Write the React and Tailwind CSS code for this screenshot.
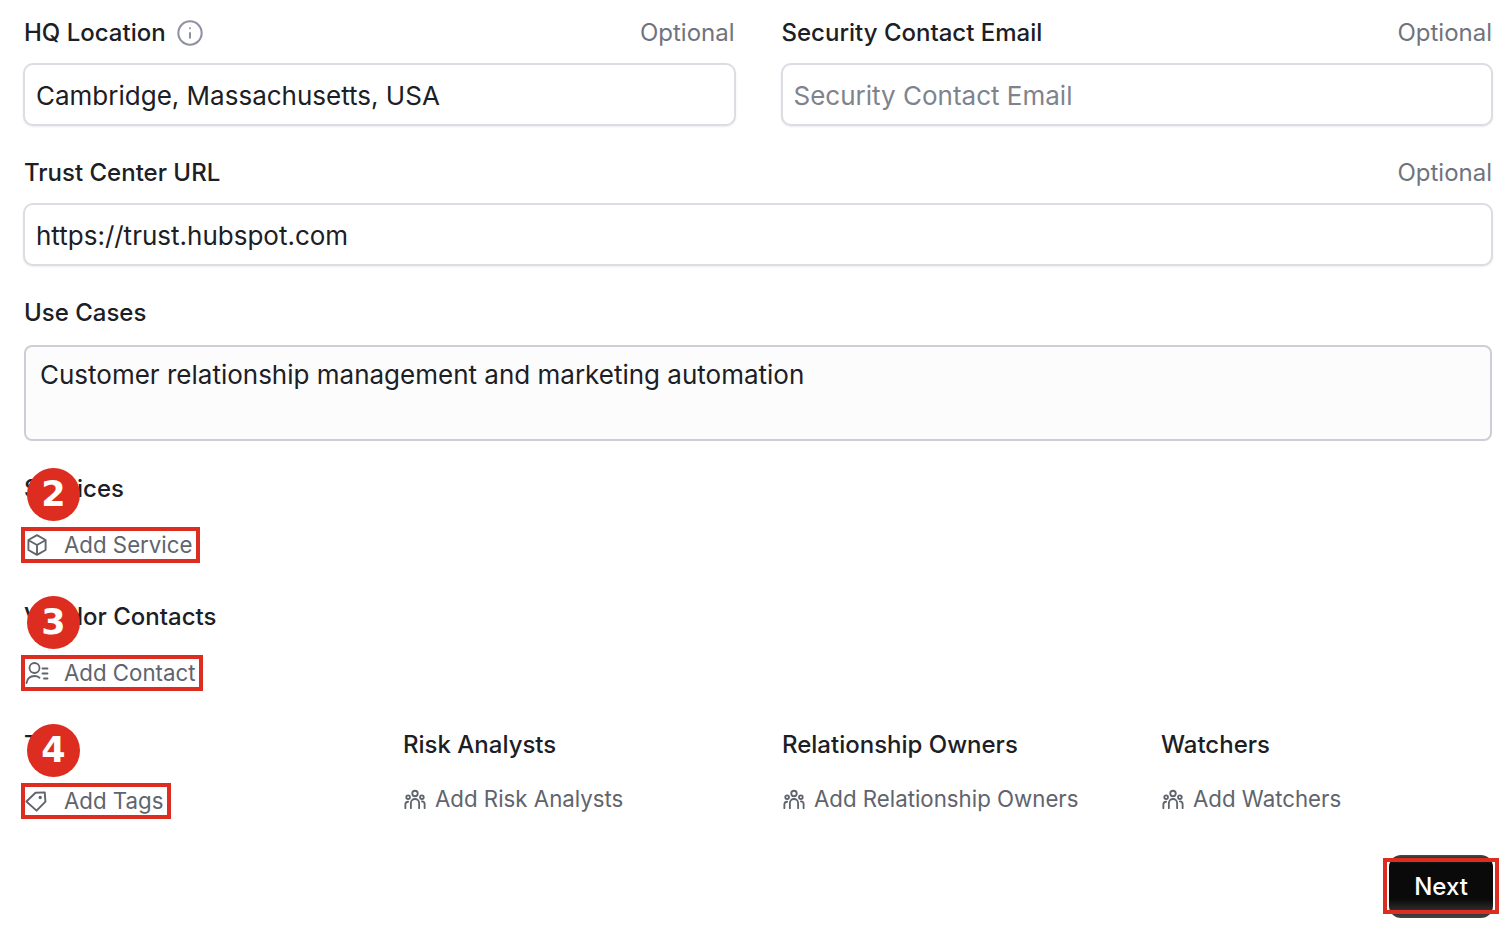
import React from "react";
import { Info } from "lucide-react";

const font = { fontFamily: "Inter, 'Noto Sans', sans-serif" };

function Label({ children, optional, info }) {
  return (
    <div className="flex h-[24px] items-center justify-between pl-px pr-px">
      <div className="flex items-center gap-[10px] text-[24px] leading-[24px] font-medium whitespace-nowrap text-[#1c2024]">
        <span>{children}</span>
        {info && <Info className="h-[28px] w-[28px] text-[#8f91a0]" strokeWidth={1.75} />}
      </div>
      {optional && <span className="text-[24px] leading-[24px] text-[#70737d]">Optional</span>}
    </div>
  );
}

function Input({ value, placeholder }) {
  return (
    <div className={`mt-[18px] flex h-[63px] items-center rounded-[10px] border-2 border-[#dcdde3] bg-white px-[11px] text-[26px] shadow-[0_1px_2px_rgba(0,0,0,0.08)] ${value ? "text-[#1c2024]" : "text-[#80838d]"}`}>
      <span className="pt-px">{value || placeholder}</span>
    </div>
  );
}

const BoxIcon = () => (
  <svg viewBox="0 0 24 24" className="ml-[-1px] h-[24px] w-[24px] text-[#60646c]" fill="none" stroke="currentColor" strokeWidth="1.9" strokeLinejoin="round">
    <path d="M12 2.2 20.6 7v10L12 21.8 3.4 17V7Z" />
    <path d="M3.6 7.2 12 12l8.4-4.8M12 12v9.6" />
  </svg>
);
const ContactIcon = () => (
  <svg viewBox="0 0 24 24" className="h-[24px] w-[24px] text-[#60646c]" fill="none" stroke="currentColor" strokeWidth="1.8" strokeLinecap="round">
    <circle cx="9.5" cy="7" r="5" />
    <path d="M1.5 22c.8-4.5 4-7 8-7 2 0 3.7.6 5 1.7" />
    <path d="M17.5 7.5h5M17.5 12.5h5M19 17.5h3.5" />
  </svg>
);
const TagIcon = () => (
  <svg viewBox="0 0 24 24" className="ml-[-2px] h-[22px] w-[22px] text-[#60646c]" fill="none" stroke="currentColor" strokeWidth="2.1" strokeLinejoin="round">
    <path d="M1.5 12.5 11.5 3l10-.4.8 10L12.6 22.5Z" />
    <circle cx="16.6" cy="8.2" r="1.8" fill="currentColor" stroke="none" />
  </svg>
);
const PeopleIcon = () => (
  <svg viewBox="0 0 24 24" className="h-[22px] w-[22px] text-[#60646c]" fill="none" stroke="currentColor" strokeWidth="2" strokeLinecap="round">
    <circle cx="12" cy="6" r="3" />
    <circle cx="4.5" cy="10" r="2" />
    <circle cx="19.5" cy="10" r="2" />
    <path d="M7.5 22v-5.5a4.5 4.5 0 0 1 9 0V22" />
    <path d="M1.5 22v-4.5A3 3 0 0 1 4.5 15" />
    <path d="M22.5 22v-4.5a3 3 0 0 0-3-3" />
  </svg>
);

function AddBox({ icon, children, width }) {
  return (
    <div className={`ml-[-2px] flex h-[36px] items-center border-4 border-[#dc2d20] text-[22.25px] whitespace-nowrap text-[#60646c] ${width}`}>
      <span className="mr-[15px] flex w-[24px] justify-center">{icon}</span>
      <span>{children}</span>
    </div>
  );
}

function Badge({ n }) {
  return (
    <div className="absolute left-[4px] top-[-9px] flex h-[53px] w-[53px] items-center justify-center rounded-full bg-[#dc2d20] text-[35px] font-bold text-white" style={{ fontFamily: "'DejaVu Sans', sans-serif" }}>
      {n}
    </div>
  );
}

function AddPlain({ children }) {
  return (
    <div className="mt-[24px] flex h-[36px] items-center gap-[9px] pl-[2px] text-[22.25px] whitespace-nowrap text-[#60646c]">
      <PeopleIcon />
      <span>{children}</span>
    </div>
  );
}

export default function App() {
  return (
    <div className="h-[928px] w-[1510px] overflow-hidden bg-white pl-[23px] pr-[17px] pt-[21px]" style={font}>
      <div className="grid grid-cols-2 gap-x-[45px]">
        <div>
          <Label optional info>HQ Location</Label>
          <Input value="Cambridge, Massachusetts, USA" />
        </div>
        <div>
          <Label optional>Security Contact Email</Label>
          <Input placeholder="Security Contact Email" />
        </div>
      </div>
      <div className="mt-[35px]">
        <Label optional>Trust Center URL</Label>
        <Input value="https://trust.hubspot.com" />
      </div>
      <div className="mt-[35px]">
        <Label>Use Cases</Label>
        <div className="ml-px mr-px mt-[20px] h-[96px] rounded-[8px] border-2 border-[#cdced6] bg-[#fcfcfd] px-[14px] pt-[10px] text-[26px] leading-[36px] text-[#1c2024]">
          Customer relationship management and marketing automation
        </div>
      </div>
      <div className="relative mt-[36px]">
        <Label>Services</Label>
        <Badge n="2" />
        <div className="mt-[26px]"><AddBox icon={<BoxIcon />} width="w-[179px]">Add Service</AddBox></div>
      </div>
      <div className="relative mt-[42px]">
        <Label>Vendor Contacts</Label>
        <Badge n="3" />
        <div className="mt-[26px]"><AddBox icon={<ContactIcon />} width="w-[182px]">Add Contact</AddBox></div>
      </div>
      <div className="mt-[42px] grid grid-cols-4 gap-x-[46px]">
        <div className="relative">
          <Label>Tags</Label>
          <Badge n="4" />
          <div className="mt-[26px]"><AddBox icon={<TagIcon />} width="w-[150px]">Add Tags</AddBox></div>
        </div>
        <div>
          <Label>Risk Analysts</Label>
          <AddPlain>Add Risk Analysts</AddPlain>
        </div>
        <div>
          <Label>Relationship Owners</Label>
          <AddPlain>Add Relationship Owners</AddPlain>
        </div>
        <div>
          <Label>Watchers</Label>
          <AddPlain>Add Watchers</AddPlain>
        </div>
      </div>
      <div className="mt-[36px] flex justify-end">
        <div className="relative">
          <button className="h-[63px] w-[104px] rounded-[12px] bg-[linear-gradient(#4a4a4a_0,#0a0a0a_14%,#0a0a0a_70%,#444_100%)] text-[24px] font-medium text-white">
            Next
          </button>
          <div className="absolute left-[-6px] right-[-6px] top-[3px] h-[56px] border-4 border-[#dc2d20]" />
        </div>
      </div>
    </div>
  );
}
